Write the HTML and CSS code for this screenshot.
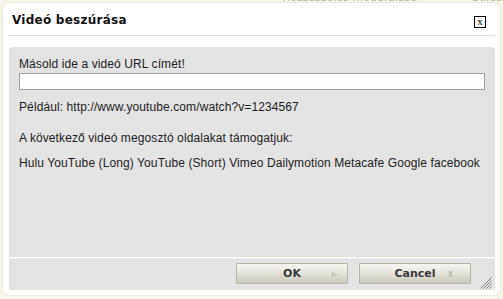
FILE: index.html
```html
<!DOCTYPE html>
<html lang="hu">
<head>
    <meta charset="UTF-8">
    <title>Videó beszúrása</title>
    <link rel="stylesheet" href="styles.css">
</head>
<body>
    <div class="backdrop">
        <span class="behind behind-1">Hozzászólás moderálása</span>
        <span class="behind behind-2">Stílus</span>
    </div>
    <div class="dialog">
        <div class="dialog-title">
            <span class="title-text">Videó beszúrása</span>
            <span class="close">x</span>
        </div>
        <div class="separator"></div>
        <div class="panel">
            <div class="panel-body">
                <label for="videoUrl" class="url-label">Másold ide a videó URL címét!</label>
                <input type="text" id="videoUrl" class="url-input">
                <p class="example">Például: http://www.youtube.com/watch?v=1234567</p>
                <p class="support">A következő videó megosztó oldalakat támogatjuk:</p>
                <p class="sites">Hulu YouTube (Long) YouTube (Short) Vimeo Dailymotion Metacafe Google facebook</p>
            </div>
            <div class="panel-footer">
                <button class="btn">OK<span class="btn-icon btn-arrow">&#9657;</span></button>
                <button class="btn">Cancel<span class="btn-icon btn-x">x</span></button>
                <svg class="grip" width="12" height="12" viewBox="0 0 12 12">
                    <path d="M11.5 0.5 L0.5 11.5 M11.5 3.5 L3.5 11.5 M11.5 6.5 L6.5 11.5 M11.5 9.5 L9.5 11.5" stroke="#7d7d7d" stroke-width="1" fill="none"/>
                </svg>
            </div>
        </div>
    </div>
</body>
</html>
```

FILE: styles.css
```css
body {
    margin: 0;
    background-color: #f7f5e7;
    font-family: "Liberation Sans", Arial, sans-serif;
    font-size: 12px;
    color: #1e1e1e;
    width: 503px;
    height: 299px;
    overflow: hidden;
    position: relative;
}
.backdrop {
    position: absolute;
    top: -9px;
    left: 0;
    width: 503px;
    height: 12px;
    font-family: "DejaVu Sans", sans-serif;
    font-size: 11px;
    color: #b9b7aa;
    filter: blur(0.6px);
}
.behind {
    position: absolute;
    top: 0;
}
.behind-1 {
    left: 282px;
}
.behind-2 {
    left: 472px;
}
.dialog {
    position: relative;
    margin: 3px 3px 0 3px;
    width: 497px;
    height: 292px;
    background-color: #fff;
    border-radius: 6px;
    box-shadow: 0 0 2px rgba(160, 150, 110, 0.35);
    box-sizing: border-box;
    padding: 0 5px 0 6px;
    display: flex;
    flex-direction: column;
}
.dialog-title {
    display: flex;
    align-items: center;
    justify-content: space-between;
    height: 32px;
    padding: 0 9px 0 3px;
}
.title-text {
    font-family: "DejaVu Sans", Verdana, sans-serif;
    font-weight: bold;
    font-size: 12px;
    color: #111;
    letter-spacing: 0.25px;
    margin-top: 2px;
}
.close {
    width: 10px;
    height: 10px;
    border: 1px solid #000;
    font-family: "Liberation Serif", serif;
    font-size: 11px;
    line-height: 8px;
    text-align: center;
    color: #000;
    margin-top: 6px;
}
.separator {
    height: 1px;
    background-color: #dcdcdc;
    margin-left: -1px;
}
.panel {
    margin-top: 11px;
    background-color: #e3e3e3;
    border-radius: 4px 4px 0 0;
    flex: 1;
    display: flex;
    flex-direction: column;
    margin-bottom: 5px;
}
.panel-body {
    padding: 10px 10px 0 10px;
    height: 200px;
    border-bottom: 1px solid #fff;
    letter-spacing: 0.1px;
}
.url-label {
    display: block;
    line-height: 14px;
}
.url-input {
    display: block;
    width: 100%;
    height: 17px;
    margin-top: 2px;
    box-sizing: border-box;
    border: 1px solid #a0a0a0;
    background-color: #fff;
    padding: 0 3px;
}
.example, .support, .sites {
    margin: 0;
    line-height: 14px;
}
.example {
    margin-top: 10px;
}
.support {
    margin-top: 17px;
}
.sites {
    margin-top: 11px;
    white-space: nowrap;
}
.panel-footer {
    position: relative;
    flex: 1;
    border-top: 1px solid #ececec;
    display: flex;
    justify-content: flex-end;
    align-items: flex-start;
    gap: 11px;
    padding: 4px 24px 0 0;
}
.btn {
    position: relative;
    width: 112px;
    height: 21px;
    border: 1px solid #b4b3a6;
    border-radius: 1px;
    background: linear-gradient(#f6f6f1, #e6e5dc 45%, #c9c8ba);
    font-family: "DejaVu Sans", Tahoma, sans-serif;
    font-weight: bold;
    font-size: 11px;
    color: #3a3a3a;
    padding: 0;
    text-align: center;
    line-height: 19px;
}
.btn-icon {
    position: absolute;
    top: 0;
    font-weight: normal;
    color: #a8a79a;
}
.btn-arrow {
    right: 10px;
    font-size: 10px;
}
.btn-x {
    right: 17px;
    font-family: "Liberation Sans", sans-serif;
    font-size: 10px;
}
.grip {
    position: absolute;
    right: 3px;
    bottom: 1px;
}
```
